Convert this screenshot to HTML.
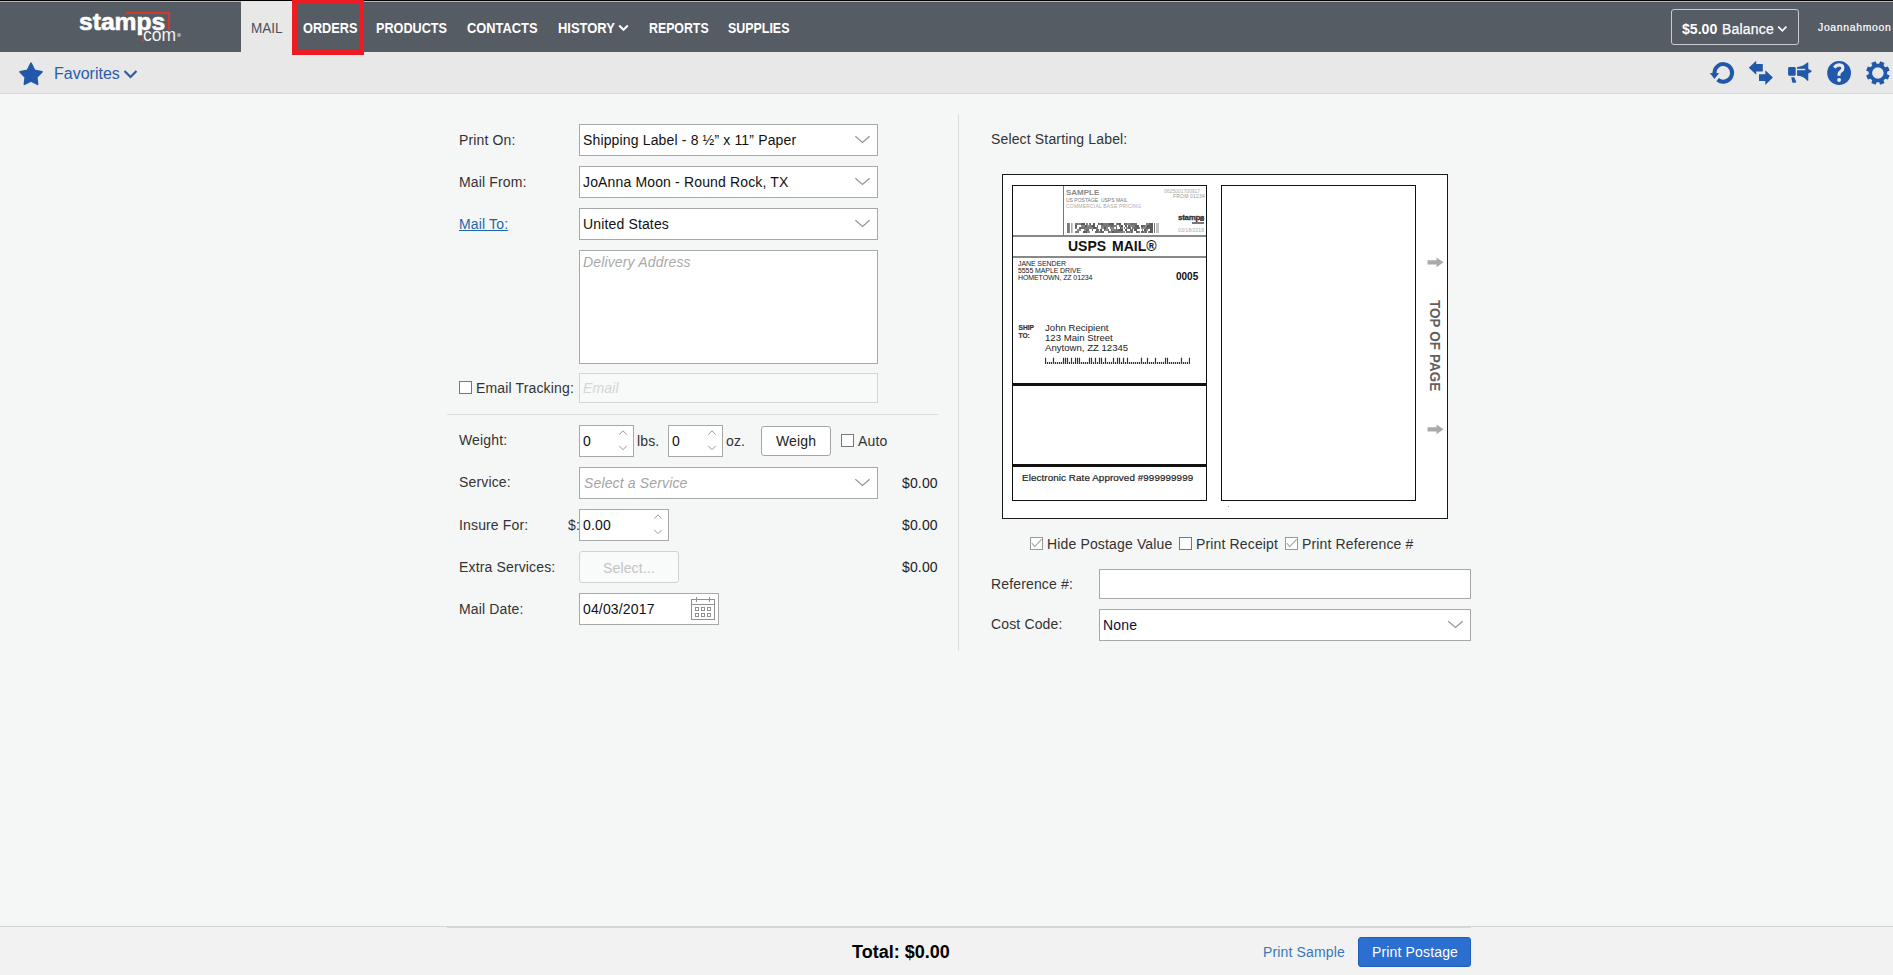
<!DOCTYPE html>
<html><head><meta charset="utf-8">
<style>
*{box-sizing:border-box}
html,body{margin:0;padding:0}
body{width:1893px;height:975px;overflow:hidden;position:relative;background:#f5f6f6;font-family:"Liberation Sans",sans-serif;font-size:14px;color:#333;letter-spacing:0.15px}
.a{position:absolute}
.t{position:absolute;white-space:nowrap;line-height:1}
.nav{position:absolute;top:19.9px;color:#fff;font-weight:bold;font-size:15.2px;line-height:16px;letter-spacing:0;white-space:nowrap;transform-origin:0 0}
.lbl{position:absolute;left:459px;color:#333;font-size:14px;line-height:14px;white-space:nowrap}
.box{position:absolute;background:#fff;border:1px solid #a8a8a8}
.sel .v{position:absolute;left:3px;top:7px;font-size:14px;line-height:16px;color:#111;white-space:nowrap}
.chev{position:absolute}
.cb{position:absolute;width:13px;height:13px;border:1px solid #777;background:#fff}
.price{position:absolute;left:902px;font-size:14px;line-height:14px;color:#222}
</style></head>
<body>
<!-- top lines -->
<div class="a" style="left:0;top:0;width:1893px;height:1px;background:#000"></div>
<div class="a" style="left:0;top:1px;width:1893px;height:1px;background:#bbbbbb"></div>
<!-- header -->
<div class="a" style="left:0;top:2px;width:1893px;height:50px;background:#565c64"></div>
<div class="a" style="left:0;top:2px;width:1893px;height:1px;background:#50565c"></div>
<!-- MAIL tab -->
<div class="a" style="left:241px;top:1px;width:51px;height:51px;background:#e8e8e8"></div>

<!-- sub header -->
<div class="a" style="left:0;top:52px;width:1893px;height:41px;background:#e8e8e8"></div>
<div class="a" style="left:0;top:93px;width:1893px;height:1px;background:#d8d8d8"></div>


<!-- logo -->
<div class="t" style="letter-spacing:0;left:79px;top:11px;font-size:23px;font-weight:bold;color:#fff;transform:scaleX(1.07);transform-origin:0 0;-webkit-text-stroke:0.6px #fff">stamps</div>
<div class="a" style="left:126px;top:12px;width:44px;height:2px;background:#d8382e"></div>
<div class="a" style="left:168px;top:12px;width:2px;height:18px;background:#d8382e"></div>
<div class="t" style="letter-spacing:0;left:143px;top:27px;font-size:17.5px;color:#f2f2f2">com</div>
<div class="a" style="left:141px;top:39px;width:3px;height:3px;background:#e0342a;border-radius:50%"></div>
<div class="a" style="left:177px;top:33px;width:4px;height:4px;background:#a3a7ab;border-radius:50%"></div>

<!-- nav -->
<div class="t" style="letter-spacing:0;left:251px;top:20px;font-size:15px;color:#4a5058;transform:scaleX(0.9);transform-origin:0 0">MAIL</div>
<div class="nav" style="left:303px;transform:scaleX(0.838)">ORDERS</div>
<div class="nav" style="left:376px;transform:scaleX(0.833)">PRODUCTS</div>
<div class="nav" style="left:467px;transform:scaleX(0.847)">CONTACTS</div>
<div class="nav" style="left:558px;transform:scaleX(0.853)">HISTORY</div>
<svg class="a" style="left:618px;top:24px" width="11" height="8" viewBox="0 0 11 8"><path d="M1.2 1.5 L5.5 5.8 L9.8 1.5" fill="none" stroke="#fff" stroke-width="2"/></svg>
<div class="nav" style="left:649px;transform:scaleX(0.812)">REPORTS</div>
<div class="nav" style="left:728px;transform:scaleX(0.818)">SUPPLIES</div>

<!-- red highlight box -->
<div class="a" style="left:292px;top:-2px;width:72px;height:57px;border:5px solid #ed1c24"></div>

<!-- balance -->
<div class="a" style="left:1671px;top:9px;width:128px;height:36px;border:1px solid #c9cbce;border-radius:3px"></div>
<div class="t" style="letter-spacing:0;left:1682px;top:20.5px;font-size:15px;font-weight:bold;color:#fff;transform:scaleX(0.94);transform-origin:0 0">$5.00</div>
<div class="t" style="letter-spacing:0;left:1722px;top:22px;font-size:14px;color:#fff;transform:scaleX(1.0);transform-origin:0 0;-webkit-text-stroke:0.25px #fff;letter-spacing:0.2px">Balance</div>
<svg class="a" style="left:1777px;top:25px" width="11" height="9" viewBox="0 0 11 9"><path d="M1.2 1.6 L5.3 5.8 L9.4 1.6" fill="none" stroke="#fff" stroke-width="1.7"/></svg>
<div class="t" style="letter-spacing:0.7px;left:1818px;top:22.6px;font-size:10.4px;color:#fff;-webkit-text-stroke:0.2px #fff">Joannahmoon</div>

<!-- right icons -->
<svg class="a" style="left:1700px;top:56px" width="193" height="34" viewBox="0 0 193 34">
<g fill="#2158a9">
<path d="M14.45 16.9 A8.8 8.8 0 1 1 17.59 23.64" fill="none" stroke="#2158a9" stroke-width="4"/>
<path d="M9.9 17.1 L19.2 17.1 L14.4 23.1 Z"/>
<path d="M48.8 11.8 L56.2 4.86 L56.2 8.03 L62.8 8.03 L62.8 15.4 L56.2 15.4 L56.2 18.8 Z"/>
<path d="M72.9 21.6 L65.3 14.2 L65.3 18.2 L59 18.2 L59 24.9 L65.3 24.9 L65.3 28.95 Z"/>
<rect x="88.1" y="10.9" width="7.6" height="8.95" rx="1.3"/>
<path d="M97.1 10.9 C101 10.9 104.6 9.4 107.3 6.6 L108.3 6.6 L108.3 13.1 L111.2 14.4 Q112.2 15.2 111.2 16.1 L108.3 17.4 L108.3 24.8 L107.3 24.8 C104.6 21.6 101 19.85 97.1 19.85 Z"/>
<path d="M97.1 12.8 L105.2 12.8 L105.2 14.2 L97.1 14.2 Z" fill="#e8e8e8"/>
<path d="M91.2 21.2 L94.2 21.2 L96.1 25.6 Q96.4 26.8 95.1 26.8 L93.4 26.8 Q92.5 26.8 92.2 25.9 Z"/>
<circle cx="139.1" cy="17" r="11.9"/>
<path d="M187.12 18.21 L189.66 19.39 L187.91 23.62 L185.28 22.66 L183.56 24.38 L184.52 27.01 L180.29 28.76 L179.11 26.22 L176.69 26.22 L175.51 28.76 L171.28 27.01 L172.24 24.38 L170.52 22.66 L167.89 23.62 L166.14 19.39 L168.68 18.21 L168.68 15.79 L166.14 14.61 L167.89 10.38 L170.52 11.34 L172.24 9.62 L171.28 6.99 L175.51 5.24 L176.69 7.78 L179.11 7.78 L180.29 5.24 L184.52 6.99 L183.56 9.62 L185.28 11.34 L187.91 10.38 L189.66 14.61 L187.12 15.79 Z M172.10 17.00 A5.80 5.80 0 1 0 183.70 17.00 A5.80 5.80 0 1 0 172.10 17.00 Z" fill-rule="evenodd"/>
</g>
<path d="M134.3 11.6 Q136.4 8.9 139.3 8.9 Q142.9 9.1 142.9 12 Q142.9 14 140.9 15.3 Q139 16.6 139 18.3 V19.7" fill="none" stroke="#ececec" stroke-width="3.1"/>
<circle cx="139.1" cy="24" r="1.95" fill="#ececec"/>
</svg>

<!-- favorites -->
<svg class="a" style="left:18px;top:61px" width="26" height="26" viewBox="0 0 26 26"><path d="M13 2.2 L16.5 9.2 L24 10.9 L18.8 16.1 L19.6 23.4 L13 20.1 L6.4 23.4 L7.2 16.1 L2 10.9 L9.5 9.2 Z" fill="#2158a9" stroke="#2158a9" stroke-width="1.6" stroke-linejoin="round"/></svg>
<div class="t" style="left:54px;top:66px;font-size:16px;color:#2a5ca8;letter-spacing:0">Favorites</div>
<svg class="a" style="left:123px;top:69px" width="15" height="11" viewBox="0 0 15 11"><path d="M1.5 2 L7.5 8 L13.5 2" fill="none" stroke="#2a5ca8" stroke-width="2.2"/></svg>


<!-- ===== FORM LEFT ===== -->
<div class="lbl" style="top:133px">Print On:</div>
<div class="box" style="left:579px;top:124px;width:299px;height:32px"></div>
<div class="t" style="left:583px;top:133px;font-size:14px;color:#111">Shipping Label - 8 &#189;&#8221; x 11&#8221; Paper</div>
<svg class="a" style="left:855px;top:135px" width="16" height="9" viewBox="0 0 16 9"><path d="M0.3 1.2 L7.5 7.4 L14.7 1.2" fill="none" stroke="#959595" stroke-width="1.3"/></svg>
<div class="lbl" style="top:175px">Mail From:</div>
<div class="box" style="left:579px;top:166px;width:299px;height:32px"></div>
<div class="t" style="left:583px;top:175px;font-size:14px;color:#111">JoAnna Moon - Round Rock, TX</div>
<svg class="a" style="left:855px;top:177px" width="16" height="9" viewBox="0 0 16 9"><path d="M0.3 1.2 L7.5 7.4 L14.7 1.2" fill="none" stroke="#959595" stroke-width="1.3"/></svg>
<div class="lbl" style="top:217px;color:#1c66aa;text-decoration:underline">Mail To:</div>
<div class="box" style="left:579px;top:208px;width:299px;height:32px"></div>
<div class="t" style="left:583px;top:217px;font-size:14px;color:#111">United States</div>
<svg class="a" style="left:855px;top:219px" width="16" height="9" viewBox="0 0 16 9"><path d="M0.3 1.2 L7.5 7.4 L14.7 1.2" fill="none" stroke="#959595" stroke-width="1.3"/></svg>
<div class="box" style="left:579px;top:250px;width:299px;height:114px"></div>
<div class="t" style="left:583px;top:255px;font-size:14px;color:#a9a9a9;font-style:italic">Delivery Address</div>

<div class="cb" style="left:459px;top:381px"></div>
<div class="t" style="left:476px;top:381px;font-size:14px;color:#333">Email Tracking:</div>
<div class="a" style="left:579px;top:373px;width:299px;height:30px;background:#f8f9f9;border:1px solid #d4d4d4"></div>
<div class="t" style="left:583px;top:381px;font-size:14px;color:#d6d6d6;font-style:italic">Email</div>

<div class="a" style="left:447px;top:414px;width:491px;height:1px;background:#dcdcdc"></div>

<div class="lbl" style="top:433px">Weight:</div>
<div class="box" style="left:579px;top:425px;width:55px;height:32px"></div>
<div class="t" style="left:583px;top:434px;font-size:14px;color:#111">0</div>
<svg class="a" style="left:618px;top:429px" width="10" height="23" viewBox="0 0 10 23"><path d="M1.3 5.6 L5 1.8 L8.7 5.6 M1.3 16.9 L5 20.7 L8.7 16.9" fill="none" stroke="#9a95a0" stroke-width="1"/></svg>
<div class="t" style="left:637px;top:434px;font-size:14px;color:#333">lbs.</div>
<div class="box" style="left:668px;top:425px;width:55px;height:32px"></div>
<div class="t" style="left:672px;top:434px;font-size:14px;color:#111">0</div>
<svg class="a" style="left:707px;top:429px" width="10" height="23" viewBox="0 0 10 23"><path d="M1.3 5.6 L5 1.8 L8.7 5.6 M1.3 16.9 L5 20.7 L8.7 16.9" fill="none" stroke="#9a95a0" stroke-width="1"/></svg>
<div class="t" style="left:726px;top:434px;font-size:14px;color:#333">oz.</div>
<div class="a" style="left:761px;top:426px;width:70px;height:30px;background:#fff;border:1px solid #a6a6a6;border-radius:3px"></div>
<div class="t" style="left:776px;top:434px;font-size:14px;color:#222">Weigh</div>
<div class="cb" style="left:841px;top:434px"></div>
<div class="t" style="left:858px;top:434px;font-size:14px;color:#333">Auto</div>

<div class="lbl" style="top:475px">Service:</div>
<div class="box" style="left:579px;top:467px;width:299px;height:32px"></div>
<div class="t" style="left:584px;top:476px;font-size:14px;color:#a5a5a5;font-style:italic">Select a Service</div>
<svg class="a" style="left:855px;top:478px" width="16" height="9" viewBox="0 0 16 9"><path d="M0.3 1.2 L7.5 7.4 L14.7 1.2" fill="none" stroke="#959595" stroke-width="1.3"/></svg>
<div class="price" style="top:476px">$0.00</div>

<div class="lbl" style="top:518px">Insure For:</div>
<div class="t" style="left:568px;top:518px;font-size:14px;color:#333">$:</div>
<div class="box" style="left:579px;top:509px;width:90px;height:32px"></div>
<div class="t" style="left:583px;top:518px;font-size:14px;color:#111">0.00</div>
<svg class="a" style="left:653px;top:513px" width="10" height="23" viewBox="0 0 10 23"><path d="M1.3 5.6 L5 1.8 L8.7 5.6 M1.3 16.9 L5 20.7 L8.7 16.9" fill="none" stroke="#9a95a0" stroke-width="1"/></svg>
<div class="price" style="top:518px">$0.00</div>

<div class="lbl" style="top:560px">Extra Services:</div>
<div class="a" style="left:579px;top:551px;width:100px;height:32px;background:#f9fafa;border:1px solid #d2d2d2;border-radius:3px"></div>
<div class="t" style="left:603px;top:560.6px;font-size:14px;color:#c4c4c4">Select...</div>
<div class="price" style="top:560px">$0.00</div>

<div class="lbl" style="top:602px">Mail Date:</div>
<div class="box" style="left:579px;top:593px;width:140px;height:32px"></div>
<div class="t" style="left:583px;top:602px;font-size:14px;color:#111">04/03/2017</div>
<svg class="a" style="left:690px;top:596px" width="26" height="25" viewBox="0 0 26 25"><g fill="none" stroke="#909090" stroke-width="1"><rect x="1.5" y="3.5" width="23" height="20"/><path d="M1.5 8.5 H24.5 M6.5 1 V6 M19.5 1 V6"/><rect x="5.5" y="11.5" width="3" height="3"/><rect x="11.5" y="11.5" width="3" height="3"/><rect x="17.5" y="11.5" width="3" height="3"/><rect x="5.5" y="17.5" width="3" height="3"/><rect x="11.5" y="17.5" width="3" height="3"/><rect x="17.5" y="17.5" width="3" height="3"/></g></svg>

<!-- vertical separator -->
<div class="a" style="left:958px;top:114px;width:1px;height:537px;background:#dedede"></div>


<!-- ===== RIGHT PANEL ===== -->
<div class="t" style="left:991px;top:132px;font-size:14px;color:#333">Select Starting Label:</div>
<div class="a" style="left:1002px;top:174px;width:446px;height:345px;background:#fff;border:1px solid #1a1a1a"></div>
<!-- label 1 -->
<div class="a" style="left:1012px;top:185px;width:195px;height:316px;border:1px solid #111;background:#fff"></div>
<div class="a" style="left:1063px;top:186px;width:1px;height:50px;background:#777"></div>
<div class="a" style="left:1013px;top:235px;width:193px;height:2px;background:#888"></div>
<div class="a" style="left:1013px;top:256px;width:193px;height:2px;background:#888"></div>
<div class="t" style="left:1066px;top:189px;font-size:8px;font-weight:bold;color:#8a8a8a;letter-spacing:0">SAMPLE</div>
<div class="t" style="left:1066px;top:198px;font-size:5px;color:#777;letter-spacing:0">US POSTAGE&nbsp;&nbsp;USPS MAIL</div>
<div class="t" style="left:1066px;top:204px;font-size:5px;color:#aaa;letter-spacing:0.2px">COMMERCIAL BASE PRICING</div>
<div class="t" style="left:1164px;top:189px;font-size:5px;color:#aaa;letter-spacing:0">0625001700917</div>
<div class="t" style="left:1173px;top:194px;font-size:5px;color:#999;letter-spacing:0.2px">FROM 01234</div>
<div class="t" style="left:1178px;top:214px;font-size:8px;font-weight:bold;color:#333;letter-spacing:-0.3px;-webkit-text-stroke:0.3px #333">stamps</div>
<div class="a" style="left:1200px;top:217px;width:4px;height:4px;background:#555"></div>
<div class="a" style="left:1192px;top:222px;width:12px;height:2px;background:#777"></div>
<div class="t" style="left:1178px;top:228px;font-size:5px;color:#aaa;letter-spacing:0.1px">03/18/2018</div>
<svg class="a" style="left:1067px;top:223px" width="98" height="11" viewBox="0 0 98 11"><rect x="0" y="0" width="2" height="10" fill="#7a7a7a"/><rect x="2" y="0" width="1" height="10" fill="#888"/><rect x="4" y="0" width="1" height="10" fill="#aaa"/><rect x="5" y="0" width="1" height="10" fill="#ccc"/><rect x="8" y="0" width="3" height="2" fill="#7a7a7a"/><rect x="11" y="0" width="3" height="2" fill="#8a8a8a"/><rect x="14" y="0" width="1" height="2" fill="#5a5a5a"/><rect x="15" y="0" width="1" height="2" fill="#5a5a5a"/><rect x="16" y="0" width="2" height="2" fill="#5a5a5a"/><rect x="19" y="0" width="2" height="2" fill="#8a8a8a"/><rect x="22" y="0" width="1" height="2" fill="#8a8a8a"/><rect x="23" y="0" width="1" height="2" fill="#6a6a6a"/><rect x="26" y="0" width="2" height="2" fill="#5a5a5a"/><rect x="31" y="0" width="1" height="2" fill="#5a5a5a"/><rect x="32" y="0" width="2" height="2" fill="#7a7a7a"/><rect x="34" y="0" width="2" height="2" fill="#5a5a5a"/><rect x="36" y="0" width="2" height="2" fill="#7a7a7a"/><rect x="38" y="0" width="3" height="2" fill="#7a7a7a"/><rect x="41" y="0" width="1" height="2" fill="#7a7a7a"/><rect x="42" y="0" width="2" height="2" fill="#5a5a5a"/><rect x="44" y="0" width="2" height="2" fill="#5a5a5a"/><rect x="46" y="0" width="1" height="2" fill="#6a6a6a"/><rect x="49" y="0" width="1" height="2" fill="#8a8a8a"/><rect x="50" y="0" width="2" height="2" fill="#6a6a6a"/><rect x="52" y="0" width="2" height="2" fill="#5a5a5a"/><rect x="57" y="0" width="1" height="2" fill="#5a5a5a"/><rect x="58" y="0" width="2" height="2" fill="#7a7a7a"/><rect x="60" y="0" width="3" height="2" fill="#8a8a8a"/><rect x="63" y="0" width="1" height="2" fill="#7a7a7a"/><rect x="64" y="0" width="2" height="2" fill="#6a6a6a"/><rect x="66" y="0" width="1" height="2" fill="#7a7a7a"/><rect x="67" y="0" width="1" height="2" fill="#6a6a6a"/><rect x="68" y="0" width="2" height="2" fill="#7a7a7a"/><rect x="79" y="0" width="1" height="2" fill="#7a7a7a"/><rect x="80" y="0" width="2" height="2" fill="#8a8a8a"/><rect x="82" y="0" width="1" height="2" fill="#6a6a6a"/><rect x="8" y="2" width="2" height="2" fill="#5a5a5a"/><rect x="14" y="2" width="2" height="2" fill="#8a8a8a"/><rect x="16" y="2" width="2" height="2" fill="#8a8a8a"/><rect x="18" y="2" width="2" height="2" fill="#5a5a5a"/><rect x="20" y="2" width="3" height="2" fill="#8a8a8a"/><rect x="23" y="2" width="2" height="2" fill="#7a7a7a"/><rect x="25" y="2" width="2" height="2" fill="#5a5a5a"/><rect x="27" y="2" width="1" height="2" fill="#5a5a5a"/><rect x="30" y="2" width="1" height="2" fill="#7a7a7a"/><rect x="34" y="2" width="3" height="2" fill="#7a7a7a"/><rect x="37" y="2" width="3" height="2" fill="#7a7a7a"/><rect x="40" y="2" width="2" height="2" fill="#7a7a7a"/><rect x="42" y="2" width="2" height="2" fill="#7a7a7a"/><rect x="44" y="2" width="2" height="2" fill="#6a6a6a"/><rect x="46" y="2" width="2" height="2" fill="#7a7a7a"/><rect x="48" y="2" width="2" height="2" fill="#8a8a8a"/><rect x="52" y="2" width="2" height="2" fill="#7a7a7a"/><rect x="54" y="2" width="2" height="2" fill="#5a5a5a"/><rect x="58" y="2" width="2" height="2" fill="#5a5a5a"/><rect x="61" y="2" width="2" height="2" fill="#6a6a6a"/><rect x="63" y="2" width="2" height="2" fill="#8a8a8a"/><rect x="65" y="2" width="2" height="2" fill="#7a7a7a"/><rect x="67" y="2" width="1" height="2" fill="#8a8a8a"/><rect x="68" y="2" width="3" height="2" fill="#5a5a5a"/><rect x="71" y="2" width="1" height="2" fill="#6a6a6a"/><rect x="74" y="2" width="1" height="2" fill="#5a5a5a"/><rect x="75" y="2" width="1" height="2" fill="#5a5a5a"/><rect x="76" y="2" width="2" height="2" fill="#6a6a6a"/><rect x="78" y="2" width="2" height="2" fill="#8a8a8a"/><rect x="80" y="2" width="3" height="2" fill="#5a5a5a"/><rect x="8" y="4" width="1" height="2" fill="#7a7a7a"/><rect x="9" y="4" width="1" height="2" fill="#7a7a7a"/><rect x="12" y="4" width="3" height="2" fill="#6a6a6a"/><rect x="15" y="4" width="3" height="2" fill="#6a6a6a"/><rect x="18" y="4" width="2" height="2" fill="#7a7a7a"/><rect x="20" y="4" width="3" height="2" fill="#7a7a7a"/><rect x="23" y="4" width="1" height="2" fill="#7a7a7a"/><rect x="24" y="4" width="2" height="2" fill="#8a8a8a"/><rect x="26" y="4" width="3" height="2" fill="#5a5a5a"/><rect x="29" y="4" width="1" height="2" fill="#7a7a7a"/><rect x="30" y="4" width="1" height="2" fill="#7a7a7a"/><rect x="34" y="4" width="3" height="2" fill="#8a8a8a"/><rect x="37" y="4" width="2" height="2" fill="#5a5a5a"/><rect x="39" y="4" width="2" height="2" fill="#8a8a8a"/><rect x="43" y="4" width="1" height="2" fill="#7a7a7a"/><rect x="44" y="4" width="2" height="2" fill="#8a8a8a"/><rect x="46" y="4" width="1" height="2" fill="#7a7a7a"/><rect x="49" y="4" width="1" height="2" fill="#6a6a6a"/><rect x="53" y="4" width="1" height="2" fill="#5a5a5a"/><rect x="54" y="4" width="2" height="2" fill="#7a7a7a"/><rect x="57" y="4" width="1" height="2" fill="#7a7a7a"/><rect x="59" y="4" width="2" height="2" fill="#8a8a8a"/><rect x="61" y="4" width="3" height="2" fill="#6a6a6a"/><rect x="65" y="4" width="2" height="2" fill="#7a7a7a"/><rect x="67" y="4" width="3" height="2" fill="#6a6a6a"/><rect x="70" y="4" width="2" height="2" fill="#5a5a5a"/><rect x="72" y="4" width="1" height="2" fill="#8a8a8a"/><rect x="74" y="4" width="3" height="2" fill="#8a8a8a"/><rect x="77" y="4" width="2" height="2" fill="#8a8a8a"/><rect x="79" y="4" width="2" height="2" fill="#5a5a5a"/><rect x="81" y="4" width="2" height="2" fill="#6a6a6a"/><rect x="10" y="6" width="2" height="2" fill="#8a8a8a"/><rect x="12" y="6" width="2" height="2" fill="#8a8a8a"/><rect x="17" y="6" width="2" height="2" fill="#8a8a8a"/><rect x="19" y="6" width="3" height="2" fill="#6a6a6a"/><rect x="25" y="6" width="1" height="2" fill="#6a6a6a"/><rect x="29" y="6" width="2" height="2" fill="#6a6a6a"/><rect x="31" y="6" width="1" height="2" fill="#6a6a6a"/><rect x="33" y="6" width="2" height="2" fill="#5a5a5a"/><rect x="37" y="6" width="1" height="2" fill="#6a6a6a"/><rect x="38" y="6" width="3" height="2" fill="#8a8a8a"/><rect x="41" y="6" width="1" height="2" fill="#6a6a6a"/><rect x="44" y="6" width="1" height="2" fill="#6a6a6a"/><rect x="45" y="6" width="2" height="2" fill="#8a8a8a"/><rect x="47" y="6" width="2" height="2" fill="#7a7a7a"/><rect x="49" y="6" width="1" height="2" fill="#7a7a7a"/><rect x="50" y="6" width="1" height="2" fill="#7a7a7a"/><rect x="51" y="6" width="3" height="2" fill="#5a5a5a"/><rect x="54" y="6" width="2" height="2" fill="#5a5a5a"/><rect x="58" y="6" width="2" height="2" fill="#5a5a5a"/><rect x="63" y="6" width="1" height="2" fill="#6a6a6a"/><rect x="64" y="6" width="2" height="2" fill="#6a6a6a"/><rect x="67" y="6" width="3" height="2" fill="#5a5a5a"/><rect x="75" y="6" width="1" height="2" fill="#8a8a8a"/><rect x="77" y="6" width="2" height="2" fill="#5a5a5a"/><rect x="79" y="6" width="1" height="2" fill="#8a8a8a"/><rect x="80" y="6" width="1" height="2" fill="#8a8a8a"/><rect x="8" y="8" width="2" height="2" fill="#7a7a7a"/><rect x="10" y="8" width="2" height="2" fill="#7a7a7a"/><rect x="16" y="8" width="2" height="2" fill="#5a5a5a"/><rect x="18" y="8" width="1" height="2" fill="#6a6a6a"/><rect x="19" y="8" width="1" height="2" fill="#5a5a5a"/><rect x="20" y="8" width="1" height="2" fill="#8a8a8a"/><rect x="21" y="8" width="2" height="2" fill="#8a8a8a"/><rect x="28" y="8" width="2" height="2" fill="#6a6a6a"/><rect x="30" y="8" width="1" height="2" fill="#5a5a5a"/><rect x="31" y="8" width="1" height="2" fill="#8a8a8a"/><rect x="32" y="8" width="2" height="2" fill="#7a7a7a"/><rect x="34" y="8" width="1" height="2" fill="#5a5a5a"/><rect x="35" y="8" width="2" height="2" fill="#6a6a6a"/><rect x="41" y="8" width="2" height="2" fill="#6a6a6a"/><rect x="43" y="8" width="1" height="2" fill="#8a8a8a"/><rect x="44" y="8" width="1" height="2" fill="#7a7a7a"/><rect x="45" y="8" width="2" height="2" fill="#5a5a5a"/><rect x="47" y="8" width="1" height="2" fill="#6a6a6a"/><rect x="48" y="8" width="3" height="2" fill="#6a6a6a"/><rect x="51" y="8" width="3" height="2" fill="#7a7a7a"/><rect x="54" y="8" width="2" height="2" fill="#7a7a7a"/><rect x="56" y="8" width="2" height="2" fill="#8a8a8a"/><rect x="59" y="8" width="1" height="2" fill="#6a6a6a"/><rect x="60" y="8" width="3" height="2" fill="#7a7a7a"/><rect x="63" y="8" width="1" height="2" fill="#8a8a8a"/><rect x="64" y="8" width="2" height="2" fill="#6a6a6a"/><rect x="69" y="8" width="3" height="2" fill="#6a6a6a"/><rect x="72" y="8" width="1" height="2" fill="#8a8a8a"/><rect x="74" y="8" width="1" height="2" fill="#6a6a6a"/><rect x="75" y="8" width="2" height="2" fill="#6a6a6a"/><rect x="77" y="8" width="1" height="2" fill="#8a8a8a"/><rect x="78" y="8" width="2" height="2" fill="#6a6a6a"/><rect x="81" y="8" width="1" height="2" fill="#8a8a8a"/><rect x="82" y="8" width="1" height="2" fill="#6a6a6a"/><rect x="83" y="0" width="3" height="10" fill="#5a5a5a"/><rect x="87" y="0" width="1" height="10" fill="#777"/><rect x="89" y="0" width="3" height="10" fill="#c4c4c4"/></svg>
<div class="t" style="left:1068px;top:239px;font-size:14px;font-weight:bold;color:#111;letter-spacing:0;word-spacing:2px">USPS MAIL&#174;</div>
<div class="t" style="left:1018px;top:260px;font-size:7px;color:#222;letter-spacing:-0.1px;line-height:7px">JANE SENDER<br>5555 MAPLE DRIVE<br>HOMETOWN, ZZ 01234</div>
<div class="t" style="left:1176px;top:272px;font-size:10px;font-weight:bold;color:#111;letter-spacing:0">0005</div>
<div class="t" style="left:1018.5px;top:324px;font-size:6.6px;font-weight:bold;color:#333;letter-spacing:0;line-height:8px;-webkit-text-stroke:0.2px #333">SHIP<br>TO:</div>
<div class="t" style="left:1045px;top:323px;font-size:9.6px;color:#222;letter-spacing:0;line-height:10px">John Recipient<br>123 Main Street<br>Anytown, ZZ 12345</div>
<svg class="a" style="left:1045px;top:357px" width="145" height="8" viewBox="0 0 145 8"><path d="M0.5 0.8V7 M2.5 5V7 M4.5 5V7 M6.5 5V7 M8.5 0.8V7 M10.5 5V7 M12.5 5V7 M14.5 5V7 M16.5 5V7 M18.5 0.8V7 M20.5 0.8V7 M22.5 0.8V7 M24.5 5V7 M26.5 0.8V7 M28.5 5V7 M30.5 0.8V7 M32.5 0.8V7 M34.5 0.8V7 M36.5 5V7 M38.5 5V7 M40.5 5V7 M42.5 5V7 M44.5 0.8V7 M46.5 0.8V7 M48.5 5V7 M50.5 0.8V7 M52.5 5V7 M54.5 0.8V7 M56.5 0.8V7 M58.5 5V7 M60.5 0.8V7 M62.5 5V7 M64.5 5V7 M66.5 5V7 M68.5 0.8V7 M70.5 5V7 M72.5 0.8V7 M74.5 0.8V7 M76.5 5V7 M78.5 0.8V7 M80.5 5V7 M82.5 0.8V7 M84.5 5V7 M86.5 5V7 M88.5 5V7 M90.5 5V7 M92.5 5V7 M94.5 5V7 M96.5 0.8V7 M98.5 5V7 M100.5 5V7 M102.5 0.8V7 M104.5 5V7 M106.5 5V7 M108.5 5V7 M110.5 0.8V7 M112.5 5V7 M114.5 5V7 M116.5 5V7 M118.5 5V7 M120.5 0.8V7 M122.5 0.8V7 M124.5 5V7 M126.5 5V7 M128.5 5V7 M130.5 5V7 M132.5 5V7 M134.5 5V7 M136.5 0.8V7 M138.5 5V7 M140.5 5V7 M142.5 5V7 M144.5 0.8V7" stroke="#333" stroke-width="1.2"/></svg>
<div class="a" style="left:1013px;top:383px;width:193px;height:3px;background:#111"></div>
<div class="a" style="left:1013px;top:464px;width:193px;height:3px;background:#111"></div>
<div class="t" style="left:1022px;top:473px;font-size:9.8px;color:#222;letter-spacing:0.1px;-webkit-text-stroke:0.2px #222">Electronic Rate Approved #999999999</div>
<div class="a" style="left:1228px;top:506px;width:1px;height:1px;background:#999"></div>
<!-- label 2 -->
<div class="a" style="left:1221px;top:185px;width:195px;height:316px;border:1px solid #111;background:#fff"></div>
<!-- arrows & top of page -->
<svg class="a" style="left:1427px;top:257px" width="17" height="11" viewBox="0 0 17 11"><path d="M0.5 3.2 H9.5 V0.5 L16.5 5.3 L9.5 10.3 V7.4 H0.5 Z" fill="#aaaaaa"/></svg>
<svg class="a" style="left:1427px;top:424px" width="17" height="11" viewBox="0 0 17 11"><path d="M0.5 3.2 H9.5 V0.5 L16.5 5.3 L9.5 10.3 V7.4 H0.5 Z" fill="#aaaaaa"/></svg>
<div class="t" style="left:1442px;top:300px;font-size:14px;font-weight:bold;color:#606060;letter-spacing:0.1px;transform:rotate(90deg) scaleX(0.96);transform-origin:0 0">TOP OF PAGE</div>

<!-- options -->
<div class="cb" style="left:1030px;top:537px;border-color:#999"></div>
<svg class="a" style="left:1030px;top:537px" width="13" height="13" viewBox="0 0 13 13"><path d="M1.8 6 L4.6 9.6 L11.6 2.4" fill="none" stroke="#a8a8a8" stroke-width="1.2"/></svg>
<div class="t" style="left:1047px;top:537px;font-size:14px;color:#333">Hide Postage Value</div>
<div class="cb" style="left:1179px;top:537px;border-color:#777"></div>
<div class="t" style="left:1196px;top:537px;font-size:14px;color:#333">Print Receipt</div>
<div class="cb" style="left:1285px;top:537px;border-color:#999"></div>
<svg class="a" style="left:1285px;top:537px" width="13" height="13" viewBox="0 0 13 13"><path d="M1.8 6 L4.6 9.6 L11.6 2.4" fill="none" stroke="#a8a8a8" stroke-width="1.2"/></svg>
<div class="t" style="left:1302px;top:537px;font-size:14px;color:#333">Print Reference #</div>

<div class="t" style="left:991px;top:577px;font-size:14px;color:#333">Reference #:</div>
<div class="box" style="left:1099px;top:569px;width:372px;height:30px"></div>
<div class="t" style="left:991px;top:617px;font-size:14px;color:#333">Cost Code:</div>
<div class="box" style="left:1099px;top:609px;width:372px;height:32px"></div>
<div class="t" style="left:1103px;top:618px;font-size:14px;color:#0d0d3a">None</div>
<svg class="a" style="left:1448px;top:620px" width="16" height="9" viewBox="0 0 16 9"><path d="M0.3 1.2 L7.5 7.4 L14.7 1.2" fill="none" stroke="#959595" stroke-width="1.3"/></svg>

<!-- footer content -->

<!-- footer -->
<div class="a" style="left:0;top:926px;width:1893px;height:49px;background:#f2f2f2;border-top:1px solid #d4d4d4"></div>
<div class="a" style="left:447px;top:927px;width:1024px;height:1px;background:#d6d6d6"></div>


<div class="t" style="left:852px;top:943px;font-size:18px;font-weight:bold;color:#000;letter-spacing:0">Total: $0.00</div>
<div class="t" style="left:1263px;top:945px;font-size:14px;color:#3b78b6">Print Sample</div>
<div class="a" style="left:1358px;top:937px;width:113px;height:30px;background:#2b6fd0;border:1px solid #1f5dbb;border-radius:3px"></div>
<div class="t" style="left:1372px;top:945px;font-size:14px;color:#fff">Print Postage</div>
</body></html>
